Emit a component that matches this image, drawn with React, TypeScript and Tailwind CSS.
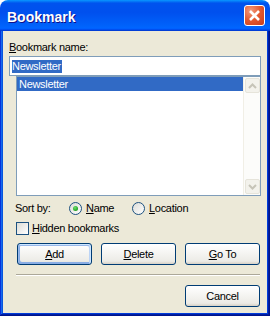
import React from "react";

function U({ children }: { children: React.ReactNode }) {
  return <span className="underline decoration-1 underline-offset-[1px]">{children}</span>;
}

function Radio({ checked }: { checked?: boolean }) {
  return (
    <span className="relative w-[13px] h-[13px] shrink-0 rounded-full border border-[#1c5180] bg-[linear-gradient(135deg,#dcdcd7,#ffffff)] flex items-center justify-center">
      {checked && (
        <span className="w-[5px] h-[5px] rounded-full bg-[radial-gradient(circle_at_40%_35%,#6fe06f,#21a121_70%,#1a7f1a)]" />
      )}
    </span>
  );
}

function Button({ children, def }: { children: React.ReactNode; def?: boolean }) {
  return (
    <div
      className={
        "w-[75px] h-[22px] shrink-0 rounded-[3px] border border-[#003c74] bg-[linear-gradient(180deg,#ffffff,#ecebe6_86%,#d6d0c5)] flex items-center justify-center " +
        (def
          ? "shadow-[inset_-1px_1px_#cee7ff,inset_1px_2px_#98b8ea,inset_-2px_2px_#bcd4f6,inset_1px_-1px_#89ade4,inset_2px_-2px_#89ade4]"
          : "")
      }
    >
      {children}
    </div>
  );
}

function ScrollBtn({ up }: { up?: boolean }) {
  return (
    <div className="w-[17px] h-[17px] p-[1px]">
      <div className="w-full h-full rounded-[2px] border border-[#e6e4da] bg-[#f3f2ec] flex items-center justify-center">
        <svg width="9" height="6" viewBox="0 0 9 6">
          <path
            d={up ? "M1 5 L4.5 1.5 L8 5" : "M1 1 L4.5 4.5 L8 1"}
            fill="none"
            stroke="#c6c4b8"
            strokeWidth="2"
          />
        </svg>
      </div>
    </div>
  );
}

export default function App() {
  return (
    <div className="w-[273px] h-[320px] bg-white font-['Liberation_Sans',Arial,sans-serif]">
      <div className="w-[270px] h-[316px] flex flex-col rounded-t-[8px] overflow-hidden">
        {/* Title bar */}
        <div className="h-[31px] shrink-0 bg-[linear-gradient(180deg,#0997ff,#0053ee_10%,#0050ee_40%,#0061fa_80%,#0066ff_90%,#005bff_94%,#003dd7_97%,#003dd7)] flex items-start justify-between pl-[7px] pr-[5px] pt-[5px]">
          <span className="mt-[4px] text-[14px] leading-[17px] font-bold text-white [text-shadow:1px_1px_#0f1089]">
            Bookmark
          </span>
          <div className="w-[21px] h-[21px] rounded-[3px] border border-white bg-[radial-gradient(circle_at_30%_25%,#f39a7c_0%,#e2582f_50%,#c83c1c_100%)] flex items-center justify-center">
            <svg width="19" height="19" viewBox="0 0 19 19">
              <path d="M5 5 L14 14 M14 5 L5 14" stroke="white" strokeWidth="2.6" />
            </svg>
          </div>
        </div>
        {/* Frame */}
        <div className="flex-1 flex px-[3px] pb-[3px] bg-[#0855dd] shadow-[inset_-1px_-1px_#00138c,inset_1px_0_#0831d9,inset_-2px_-2px_#001ea0,inset_2px_0_#166aee,inset_-3px_-3px_#003bda,inset_3px_0_#0855dd]">
          <div className="flex-1 bg-[#ece9d8] px-[6px] pt-[10px] flex flex-col text-[11px] leading-[13px] tracking-[-0.3px] text-black">
            <div>
              <U>B</U>ookmark name:
            </div>
            <div className="mt-[2px] h-[20px] border border-[#7f9db9] bg-white flex items-center pl-[2px]">
              <span className="bg-[#316ac5] text-white pr-[1px]">Newsletter</span>
            </div>
            <div className="ml-[7px] h-[120px] border border-[#7f9db9] bg-white flex">
              <div className="flex-1">
                <div className="h-[14px] bg-[#316ac5] text-white pl-[2px] leading-[14px]">Newsletter</div>
              </div>
              <div className="w-[17px] flex flex-col justify-between bg-[#fcfcfa] border-l border-[#f1efe6]">
                <ScrollBtn up />
                <ScrollBtn />
              </div>
            </div>
            <div className="mt-[6px] h-[13px] flex items-center">
              <span className="ml-[6px] w-[54px]">Sort by:</span>
              <span className="w-[63px] flex items-center gap-[4px]">
                <Radio checked />
                <span>
                  <U>N</U>ame
                </span>
              </span>
              <span className="flex items-center gap-[4px]">
                <Radio />
                <span>
                  <U>L</U>ocation
                </span>
              </span>
            </div>
            <div className="mt-[7px] h-[13px] flex items-center ml-[7px] gap-[3px]">
              <span className="w-[13px] h-[13px] border border-[#1c5180] bg-[linear-gradient(135deg,#dcdcd7,#ffffff)]" />
              <span>
                <U>H</U>idden bookmarks
              </span>
            </div>
            <div className="mt-[8px] ml-[8px] flex gap-[9px]">
              <Button def>
                <span>
                  <U>A</U>dd
                </span>
              </Button>
              <Button>
                <span>
                  <U>D</U>elete
                </span>
              </Button>
              <Button>
                <span>
                  <U>G</U>o To
                </span>
              </Button>
            </div>
            <div className="mt-[9px] ml-[7px] mr-[1px] h-[2px] border-t border-[#aca899] border-b border-b-white" />
            <div className="mt-[9px] mr-[1px] self-end">
              <Button>Cancel</Button>
            </div>
          </div>
        </div>
      </div>
    </div>
  );
}
